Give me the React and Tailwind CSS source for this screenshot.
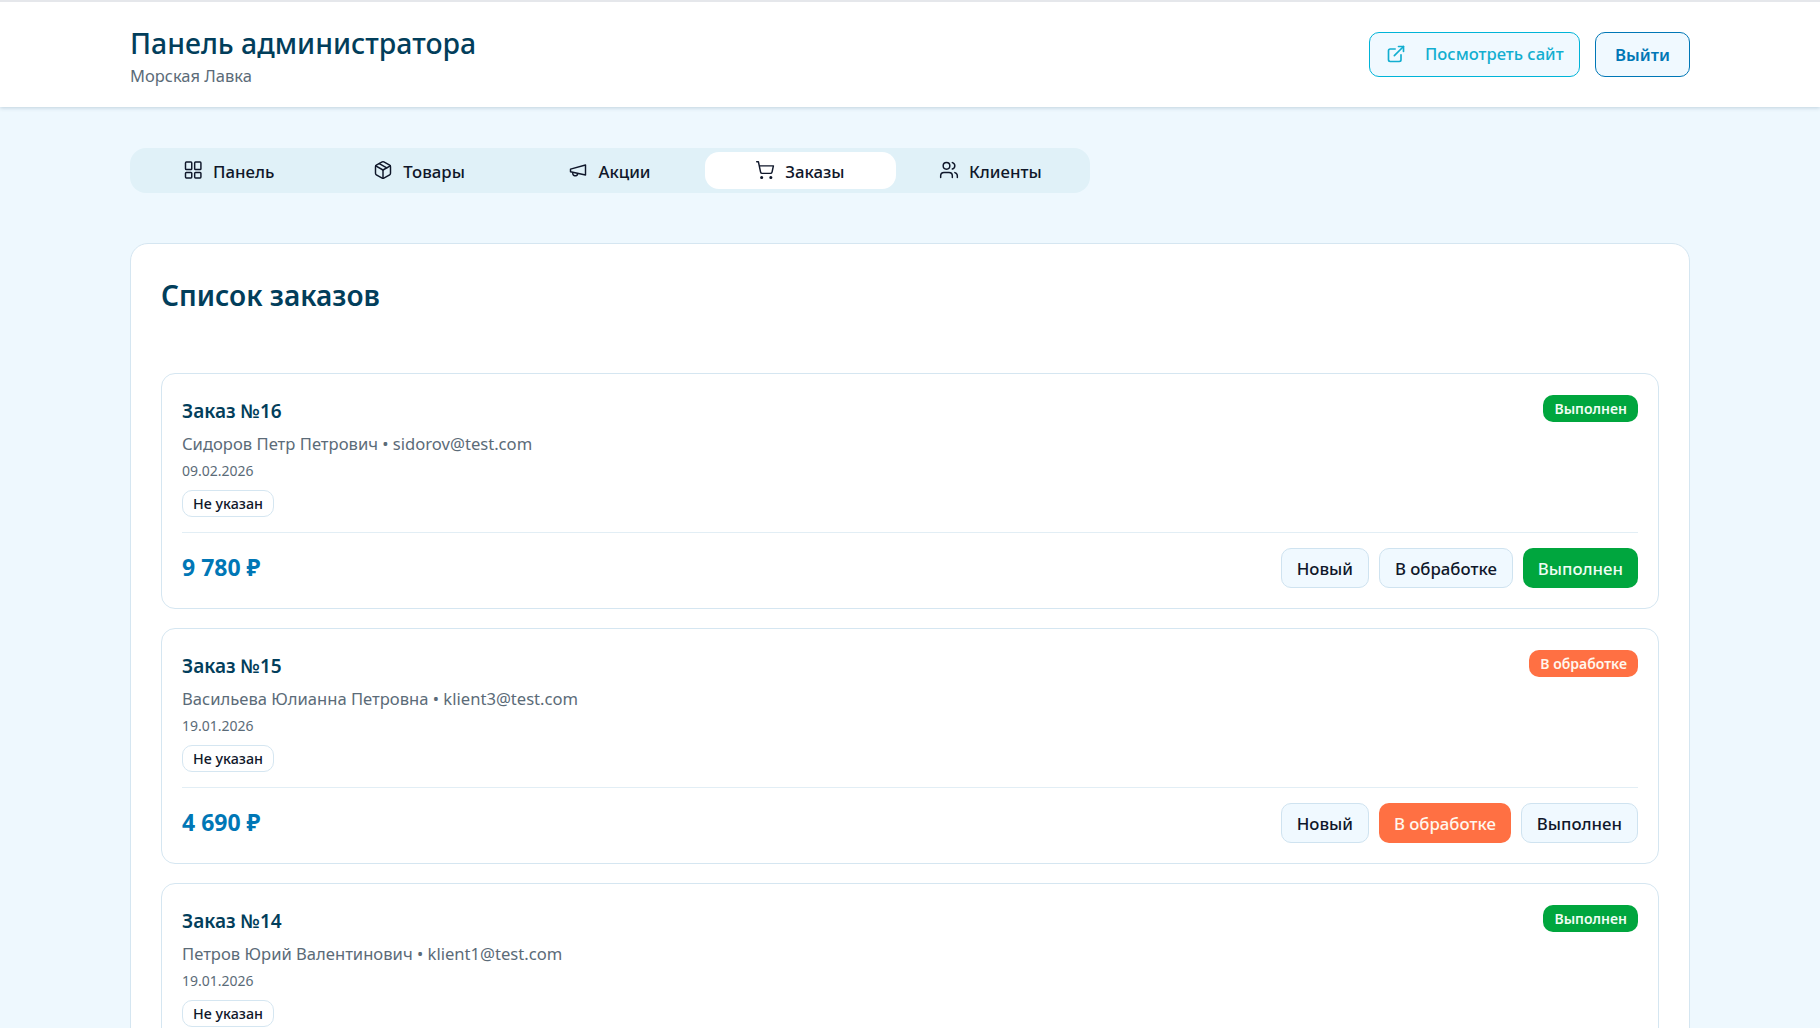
import React from "react";
import { Package, Users, ExternalLink } from "lucide-react";

const Svg = ({ children }) => (
  <svg className="w-5 h-5 mb-[2px] -ml-[1px]" viewBox="0 0 24 24" fill="none" stroke="currentColor" strokeWidth="1.75" strokeLinecap="round" strokeLinejoin="round">{children}</svg>
);

const GridIcon = () => (
  <Svg>
    <rect x="3" y="2.5" width="7.5" height="9" rx="1" />
    <rect x="14" y="2.5" width="7.5" height="9" rx="1" />
    <rect x="3" y="15" width="7.5" height="6.5" rx="1" />
    <rect x="14" y="15" width="7.5" height="6.5" rx="1" />
  </Svg>
);
const MegaphoneIcon = () => (
  <Svg>
    <path d="m3 11 18-5v12L3 14v-3z" />
    <path d="M11.6 16.8a3 3 0 1 1-5.8-1.6" />
  </Svg>
);
const CartIcon = () => (
  <Svg>
    <circle cx="8" cy="21" r="1" />
    <circle cx="19" cy="21" r="1" />
    <path d="M2.05 2.05h2l2.66 12.42a2 2 0 0 0 2 1.58h9.78a2 2 0 0 0 1.95-1.57l1.65-7.43H5.12" />
  </Svg>
);
const BoxIcon = () => <Package className="w-5 h-5 mb-[2px] -ml-[1px]" strokeWidth={1.75} />;
const UsersIcon = () => <Users className="w-5 h-5 mb-[2px] -ml-[1px]" strokeWidth={1.75} />;

const tabs = [
  { label: "Панель", Icon: GridIcon },
  { label: "Товары", Icon: BoxIcon },
  { label: "Акции", Icon: MegaphoneIcon },
  { label: "Заказы", Icon: CartIcon, active: true },
  { label: "Клиенты", Icon: UsersIcon },
];

const orders = [
  { id: 16, who: "Сидоров Петр Петрович • sidorov@test.com", date: "09.02.2026", sum: "9 780 ₽", status: "Выполнен" },
  { id: 15, who: "Васильева Юлианна Петровна • klient3@test.com", date: "19.01.2026", sum: "4 690 ₽", status: "В обработке" },
  { id: 14, who: "Петров Юрий Валентинович • klient1@test.com", date: "19.01.2026", status: "Выполнен" },
];

function StatusButton({ label, status }) {
  const on = label === status;
  const cls = !on
    ? "bg-[#f0f9ff] border border-[#cfe3f0] text-[#0f172a] px-[15px]"
    : label === "Выполнен"
    ? "bg-[#00a63e] text-[#f0fdf4] px-[15px]"
    : "bg-[#ff7043] text-[#fff7ed] px-[15px]";
  return (
    <button className={`h-10 pt-[2px] rounded-[10px] text-[16.8px] font-medium leading-none ${cls}`}>{label}</button>
  );
}

function Order({ o }) {
  const badge = o.status === "Выполнен" ? "bg-[#00a63e] text-[#f0fdf4]" : "bg-[#ff7043] text-[#fff7ed]";
  return (
    <div className="rounded-[14px] border border-[#d5e6f1] bg-white px-5 pt-[21px] pb-5 h-[236px] shrink-0">
      <div className="flex justify-between items-start">
        <div>
          <div className="text-[19px] font-semibold leading-[28px] text-[#023e5b] mt-[2px]">Заказ №{o.id}</div>
          <div className="text-[16.6px] leading-[24px] text-[#5b6b78] mt-[7px]">{o.who}</div>
          <div className="text-[14px] leading-[20px] text-[#5b6b78] mt-[5px]">{o.date}</div>
          <div className="inline-flex items-center h-[27px] mt-[9px] px-[10px] rounded-[10px] border border-[#d5e6f1] text-[14.3px] font-medium text-[#0f172a]">Не указан</div>
        </div>
        <div className={`h-[27px] px-[11px] flex items-center rounded-[10px] text-[14px] font-semibold ${badge}`}>{o.status}</div>
      </div>
      {o.sum && (
        <div className="border-t border-[#e2eef5] mt-[15px] pt-[15px] flex justify-between items-center">
          <div className="text-[23px] font-bold text-[#0077b6] -mt-[2px]">{o.sum}</div>
          <div className="flex gap-[10px]">
            <StatusButton label="Новый" status={o.status} />
            <StatusButton label="В обработке" status={o.status} />
            <StatusButton label="Выполнен" status={o.status} />
          </div>
        </div>
      )}
    </div>
  );
}

export default function App() {
  return (
    <div className="h-screen overflow-hidden bg-[#eef8fe] font-['Noto_Sans',sans-serif]">
      <header className="h-[107px] bg-white border-t-2 border-[#e5e7eb] shadow-[0_1px_4px_rgba(2,62,91,0.2)] relative">
        <div className="max-w-[1560px] mx-auto h-full flex items-center justify-between">
          <div className="mt-[3px]">
            <h1 className="text-[28.4px] font-medium leading-[36px] text-[#023e5b]">Панель администратора</h1>
            <p className="text-[16.5px] leading-[24px] text-[#5b6b78] mt-[3px]">Морская Лавка</p>
          </div>
          <div className="flex gap-[15px] -mt-[1px]">
            <button className="h-[45px] w-[211px] pt-[1px] rounded-[10px] border border-[#00b4d8] bg-[#f0f9ff] text-[#12aed0] flex items-center pl-4 gap-[19px] text-[16.6px] font-medium whitespace-nowrap">
              <ExternalLink className="w-5 h-5 -mt-[2px]" strokeWidth={2} />
              Посмотреть сайт
            </button>
            <button className="h-[45px] w-[95px] pt-[2px] rounded-[10px] border border-[#0077b6] bg-[#f0f9ff] text-[#0077b6] text-[16.8px] font-semibold">Выйти</button>
          </div>
        </div>
      </header>
      <main className="max-w-[1560px] mx-auto pt-[41px]">
        <nav className="grid grid-cols-5 p-1 h-[45px] rounded-2xl bg-[#e0f1f8] w-[960px]">
          {tabs.map(({ label, Icon, active }) => (
            <div key={label} className={`flex items-center justify-center gap-[10px] rounded-[14px] text-[16.8px] font-medium text-[#0f172a] ${active ? "bg-white" : ""}`}>
              <Icon />
              <span className="mt-[2px]">{label}</span>
            </div>
          ))}
        </nav>
        <section className="mt-[50px] rounded-[18px] border border-[#d5e6f1] bg-white px-[30px] pt-[30px]">
          <h2 className="text-[28px] font-semibold leading-[42px] text-[#023e5b]">Список заказов</h2>
          <div className="mt-[57px] flex flex-col gap-[19px]">
            {orders.map((o) => <Order key={o.id} o={o} />)}
          </div>
        </section>
      </main>
    </div>
  );
}
